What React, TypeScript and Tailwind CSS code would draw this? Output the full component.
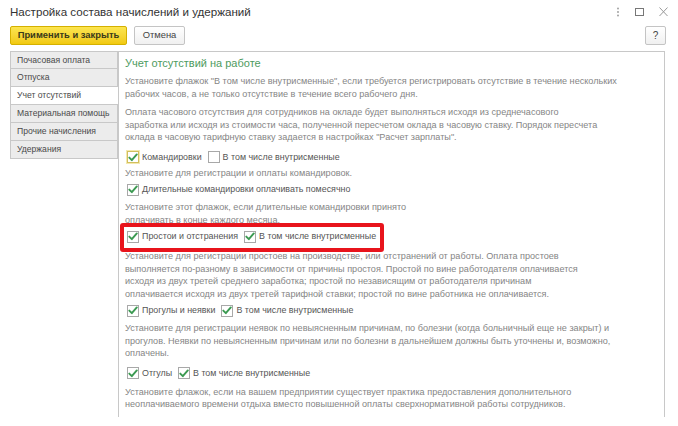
import React from "react";

const font = { fontFamily: '"Liberation Sans", Arial, sans-serif' };

function Check({ checked, focused }: { checked: boolean; focused?: boolean }) {
  return (
    <span
      className={
        "inline-flex items-center justify-center w-[12px] h-[12px] shrink-0 bg-white border " +
        (focused ? "border-[#d2bf5e] shadow-[0_0_0_1px_#f4e9ae]" : "border-[#a8a8a8]")
      }
    >
      {checked && (
        <svg width="10" height="9" viewBox="0 0 10 9">
          <path d="M1.3 4.6 L3.8 7.2 L8.8 1.4" fill="none" stroke="#3c9a52" strokeWidth="1.9" strokeLinecap="round" strokeLinejoin="round" />
        </svg>
      )}
    </span>
  );
}

function Row({ items, className = "" }: { items: { label: string; checked: boolean; focused?: boolean }[]; className?: string }) {
  return (
    <div className={"flex items-center h-[16px] pl-[2px] gap-[6px] " + className}>
      {items.map((it, i) => (
        <label key={i} className="flex items-center gap-[3px] text-[8.9px] text-[#555]">
          <Check checked={it.checked} focused={it.focused} />
          <span>{it.label}</span>
        </label>
      ))}
    </div>
  );
}

function Desc({ lines, className = "" }: { lines: string[]; className?: string }) {
  return (
    <div className={"text-[9.1px] leading-[12.5px] text-[#858585] " + className}>
      {lines.map((l, i) => (
        <div key={i} className="whitespace-nowrap">{l}</div>
      ))}
    </div>
  );
}

const tabs = ["Почасовая оплата", "Отпуска", "Учет отсутствий", "Материальная помощь", "Прочие начисления", "Удержания"];

export default function App() {
  return (
    <div className="w-[678px] h-[426px] bg-white overflow-hidden relative" style={font}>
      {/* Title bar */}
      <div className="flex items-center h-[24px] pl-[10px] pr-[9px]">
        <div className="text-[11.6px] text-[#333]">Настройка состава начислений и удержаний</div>
        <div className="ml-auto flex items-center gap-[13px]">
          <svg width="6" height="12" viewBox="0 0 6 12">
            <circle cx="3" cy="2.5" r="0.9" fill="#999" />
            <circle cx="3" cy="6" r="0.9" fill="#999" />
            <circle cx="3" cy="9.5" r="0.9" fill="#999" />
          </svg>
          <svg width="11" height="12" viewBox="0 0 11 12">
            <rect x="1.5" y="2.5" width="8" height="7" fill="none" stroke="#777" strokeWidth="1" />
          </svg>
          <svg width="11" height="12" viewBox="0 0 11 12">
            <path d="M1.5 1.5 L9.5 10 M9.5 1.5 L1.5 10" stroke="#999" strokeWidth="1" />
          </svg>
        </div>
      </div>

      {/* Toolbar */}
      <div className="flex items-start h-[22px] mt-[2px] pl-[10px] pr-[12px]">
        <button className="h-[19px] w-[117px] rounded-[2px] border border-[#d4b000] bg-gradient-to-b from-[#fce54e] to-[#f1c90c] text-[9.4px] font-bold text-[#3a3a1a]">
          Применить и закрыть
        </button>
        <button className="ml-[7px] h-[19px] w-[51px] rounded-[2px] border border-[#c4c4c4] bg-gradient-to-b from-white to-[#f0f0f0] text-[9.4px] text-[#444]">
          Отмена
        </button>
        <button className="ml-auto h-[19px] w-[21px] rounded-[2px] border border-[#c4c4c4] bg-gradient-to-b from-white to-[#f0f0f0] text-[10px] text-[#444]">
          ?
        </button>
      </div>

      {/* Body */}
      <div className="flex mt-[3px] pl-[10px] pr-[13px]">
        <div className="w-[108px] shrink-0 flex flex-col">
          {tabs.map((t, i) => {
            const active = i === 2;
            return (
              <div
                key={t}
                className={
                  "h-[18px] flex items-center pl-[6px] text-[8.6px] text-[#4a4a4a] whitespace-nowrap border-l border-[#c8c8c8] " +
                  (i === 0 ? "border-t " : "") +
                  (active ? "bg-white border-b" : "bg-[#ececec] border-b border-r")
                }
              >
                {t}
              </div>
            );
          })}
        </div>

        <div className="relative flex-1 h-[366px] border-l border-t border-r border-[#c8c8c8] pl-[6px] pt-[3px]">
          <div className="text-[11px] leading-[16px] text-[#4e9b60]">Учет отсутствий на работе</div>
          <Desc
            className="mt-[4px]"
            lines={[
              'Установите флажок "В том числе внутрисменные", если требуется регистрировать отсутствие в течение нескольких',
              "рабочих часов, а не только отсутствие в течение всего рабочего дня.",
            ]}
          />
          <Desc
            className="mt-[6px]"
            lines={[
              "Оплата часового отсутствия для сотрудников на окладе будет выполняться исходя из среднечасового",
              "заработка или исходя из стоимости часа, полученной пересчетом оклада в часовую ставку. Порядок пересчета",
              'оклада в часовую тарифную ставку задается в настройках "Расчет зарплаты".',
            ]}
          />
          <Row
            className="mt-[6px]"
            items={[
              { label: "Командировки", checked: true, focused: true },
              { label: "В том числе внутрисменные", checked: false },
            ]}
          />
          <Desc className="mt-[1px]" lines={["Установите для регистрации и оплаты командировок."]} />
          <Row className="mt-[3px]" items={[{ label: "Длительные командировки оплачивать помесячно", checked: true }]} />
          <Desc
            className="mt-[3px]"
            lines={["Установите этот флажок, если длительные командировки принято", "оплачивать в конце каждого месяца."]}
          />
          <Row
            className="mt-[3px]"
            items={[
              { label: "Простои и отстранения", checked: true },
              { label: "В том числе внутрисменные", checked: true },
            ]}
          />
          <Desc
            className="mt-[5px]"
            lines={[
              "Установите для регистрации простоев на производстве, или отстранений от работы. Оплата простоев",
              "выполняется по-разному в зависимости от причины простоя. Простой по вине работодателя оплачивается",
              "исходя из двух третей среднего заработка; простой по независящим от работодателя причинам",
              "оплачивается исходя из двух третей тарифной ставки; простой по вине работника не оплачивается.",
            ]}
          />
          <Row
            className="mt-[3px]"
            items={[
              { label: "Прогулы и неявки", checked: true },
              { label: "В том числе внутрисменные", checked: true },
            ]}
          />
          <Desc
            className="mt-[3px]"
            lines={[
              "Установите для регистрации неявок по невыясненным причинам, по болезни (когда больничный еще не закрыт) и",
              "прогулов. Неявки по невыясненным причинам или по болезни в дальнейшем должны быть уточнены и, возможно,",
              "оплачены.",
            ]}
          />
          <Row
            className="mt-[6px]"
            items={[
              { label: "Отгулы", checked: true },
              { label: "В том числе внутрисменные", checked: true },
            ]}
          />
          <Desc
            className="mt-[4px]"
            lines={[
              "Установите флажок, если на вашем предприятии существует практика предоставления дополнительного",
              "неоплачиваемого времени отдыха вместо повышенной оплаты сверхнормативной работы сотрудников.",
            ]}
          />

          {/* highlight frame around the idle-time row */}
          <div className="absolute left-[1px] top-[171px] w-[264px] h-[29px] border-[4px] border-[#e8141c] rounded-[3px] pointer-events-none" />
        </div>
      </div>
    </div>
  );
}
